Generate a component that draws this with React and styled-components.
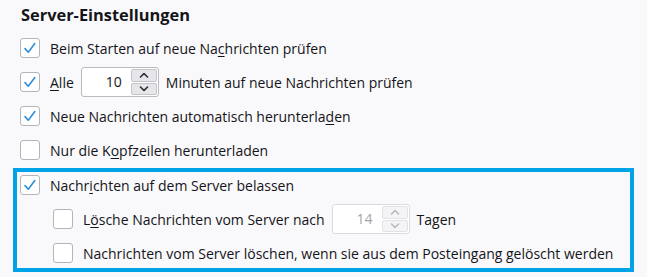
import React from 'react';
import styled, { createGlobalStyle } from 'styled-components';

const Global = createGlobalStyle`
  html, body { margin: 0; padding: 0; background: #f9f9fb; }
  body { font-family: "Open Sans", "Noto Sans", sans-serif; color: #15141a; }
`;

const Page = styled.div`
  width: 647px;
  height: 277px;
  box-sizing: border-box;
  padding: 3px 0 0 20px;
  overflow: hidden;
`;

const Heading = styled.h2`
  margin: 0 0 4px 1px;
  font-size: 16.4px;
  font-weight: 700;
  line-height: 24px;
`;

const List = styled.div`
  display: flex;
  flex-direction: column;
`;

const Row = styled.label`
  display: flex;
  align-items: center;
  height: 34px;
  gap: 10px;
  padding-left: ${p => (p.$indent ? 33 : 0)}px;
  font-size: 14px;
  white-space: nowrap;
`;

const Inline = styled.span`
  display: flex;
  align-items: center;
  gap: 7px;
`;

const Group = styled.div`
  position: relative;
  margin-top: 1px;
  display: flex;
  flex-direction: column;
`;

const Highlight = styled.div`
  position: absolute;
  top: 0;
  left: -7px;
  width: 621px;
  bottom: -2px;
  box-sizing: border-box;
  border: 4px solid #00a3e8;
  pointer-events: none;
`;

const Box = styled.span`
  width: 20px;
  height: 20px;
  flex: none;
  box-sizing: border-box;
  border: 1px solid #b4b4bb;
  border-radius: 3px;
  background: #fff;
  display: flex;
  align-items: center;
  justify-content: center;
`;

const U = styled.span`
  text-decoration: underline;
  text-underline-offset: 2px;
`;

const Spin = styled.span`
  display: inline-flex;
  width: 78px;
  height: 30px;
  box-sizing: border-box;
  border: 1px solid ${p => (p.$disabled ? '#dcdce0' : '#b9b9c0')};
  border-radius: 3px;
  background: #fff;
  overflow: hidden;
`;

const SpinValue = styled.span`
  flex: 1;
  text-align: right;
  padding-right: 9px;
  line-height: 28px;
  font-size: 14px;
  color: ${p => (p.$disabled ? '#a4a4aa' : '#15141a')};
`;

const SpinButtons = styled.span`
  width: 27px;
  display: flex;
  flex-direction: column;
  padding: 1px 1px 1px 0;
  gap: 1px;
  box-sizing: border-box;
`;

const SpinBtn = styled.span`
  flex: 1;
  display: flex;
  align-items: center;
  justify-content: center;
  background: ${p => (p.$disabled ? '#f4f4f6' : '#e6e6ea')};
  border: 1px solid ${p => (p.$disabled ? '#e2e2e6' : '#c4c4ca')};
  border-radius: 2px;
`;

const Check = ({ checked }) => (
  <Box>
    {checked && (
      <svg width="14" height="14" viewBox="0 0 14 14">
        <path d="M2 7.6 L5.3 11.2 L11.8 2.6" fill="none" stroke="#2f8ed8" strokeWidth="1.6" strokeLinecap="round" strokeLinejoin="round" />
      </svg>
    )}
  </Box>
);

const Chevron = ({ up, disabled }) => (
  <svg width="10" height="6" viewBox="0 0 10 6">
    <path
      d={up ? 'M1.5 5 L5 1.5 L8.5 5' : 'M1.5 1 L5 4.5 L8.5 1'}
      fill="none"
      stroke={disabled ? '#b8b8be' : '#2b2a33'}
      strokeWidth="1.6"
      strokeLinecap="round"
      strokeLinejoin="round"
    />
  </svg>
);

const Spinner = ({ value, disabled }) => (
  <Spin $disabled={disabled}>
    <SpinValue $disabled={disabled}>{value}</SpinValue>
    <SpinButtons>
      <SpinBtn $disabled={disabled}><Chevron up disabled={disabled} /></SpinBtn>
      <SpinBtn $disabled={disabled}><Chevron disabled={disabled} /></SpinBtn>
    </SpinButtons>
  </Spin>
);

export default function App() {
  return (
    <Page>
      <Global />
      <Heading>Server-Einstellungen</Heading>
      <List>
        <Row>
          <Check checked />
          <span>Beim Starten auf neue Na<U>c</U>hrichten prüfen</span>
        </Row>
        <Row>
          <Check checked />
          <Inline>
            <span><U>A</U>lle</span>
            <Spinner value="10" />
            <span>Minuten auf neue Nachrichten prüfen</span>
          </Inline>
        </Row>
        <Row>
          <Check checked />
          <span>Neue Nachrichten automatisch herunterla<U>d</U>en</span>
        </Row>
        <Row>
          <Check />
          <span>Nur die K<U>o</U>pfzeilen herunterladen</span>
        </Row>
        <Group>
          <Row>
            <Check checked />
            <span>Nachr<U>i</U>chten auf dem Server belassen</span>
          </Row>
          <Row $indent>
            <Check />
            <Inline>
              <span>L<U>ö</U>sche Nachrichten vom Server nach</span>
              <Spinner value="14" disabled />
              <span>Tagen</span>
            </Inline>
          </Row>
          <Row $indent>
            <Check />
            <span>Nachrichten vom Server löschen, wenn sie aus dem Postein<U>g</U>ang gelöscht werden</span>
          </Row>
          <Highlight />
        </Group>
      </List>
    </Page>
  );
}
